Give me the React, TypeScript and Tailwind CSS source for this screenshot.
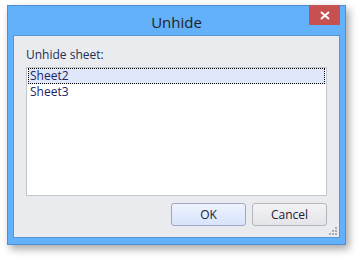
export default function App() {
  const sheets = ['Sheet2', 'Sheet3'];
  return (
    <div className="w-[360px] h-[261px] bg-white pl-[7px] pt-[5px]" style={{ fontFamily: '"Open Sans", "Noto Sans", sans-serif' }}>
      <div className="w-[339px] h-[240px] border border-[#4b8fd6] bg-[#62b1fa] flex flex-col shadow-[3px_4px_8px_rgba(0,0,0,0.35)]">
        <div className="relative h-[29px] flex items-center justify-center">
          <span className="text-[15px] text-[#222] leading-none pt-[3px]">Unhide</span>
          <button className="absolute right-[5px] top-[-1px] w-[31px] h-[20px] bg-[#c75050] flex items-center justify-center">
            <svg width="10" height="9" viewBox="0 0 10 9">
              <path d="M1 1 L9 8 M9 1 L1 8" stroke="white" strokeWidth="2" />
            </svg>
          </button>
        </div>
        <div className="flex-1 mx-[5px] mb-[6px] border border-[#5a95d3] bg-[#e9ebee] flex flex-col px-[12px] pt-[11px] relative">
          <div className="text-[12px] leading-[16px] text-[#1e2f55] mb-[4px]">Unhide sheet:</div>
          <div className="h-[129px] bg-white border border-[#c2c5cc] px-px">
            {sheets.map((s, i) => (
              <div
                key={s}
                className={
                  'h-[16px] text-[12px] leading-[14px] text-[#222266] pl-[1px] ' +
                  (i === 0 ? 'bg-[#dfe8fb] border border-dotted border-black' : 'border border-transparent')
                }
              >
                {s}
              </div>
            ))}
          </div>
          <div className="flex justify-end gap-[6px] mt-[7px]">
            <button className="w-[75px] h-[23px] rounded-[3px] border border-[#9fa8c2] bg-gradient-to-b from-[#eef3fe] to-[#d8e4fb] text-[12px] text-[#1e2030]">
              OK
            </button>
            <button className="w-[75px] h-[23px] rounded-[3px] border border-[#b3b6bd] bg-gradient-to-b from-[#f3f3f5] to-[#e4e5e9] text-[12px] text-[#1e2030]">
              Cancel
            </button>
          </div>
          <svg className="absolute right-[2px] bottom-[2px]" width="8" height="8" viewBox="0 0 8 8">
            <g fill="#a9acb3">
              <rect x="6" y="0" width="2" height="2" />
              <rect x="3" y="3" width="2" height="2" />
              <rect x="6" y="3" width="2" height="2" />
              <rect x="0" y="6" width="2" height="2" />
              <rect x="3" y="6" width="2" height="2" />
              <rect x="6" y="6" width="2" height="2" />
            </g>
          </svg>
        </div>
      </div>
    </div>
  );
}
